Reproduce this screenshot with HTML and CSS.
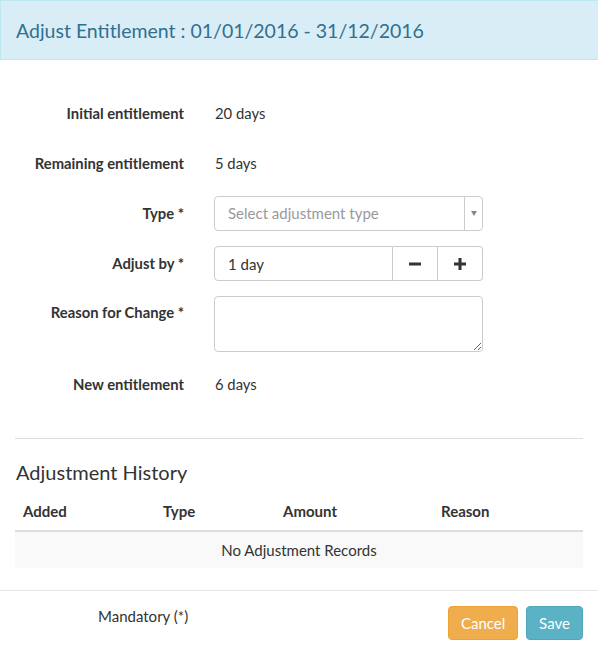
FILE: index.html
```html
<!DOCTYPE html>
<html>
<head>
<meta charset="utf-8">
<link rel="stylesheet" href="styles.css">
</head>
<body>
<div class="modal">
  <div class="modal-header">
    <h4 class="title">Adjust Entitlement : 01/01/2016 - 31/12/2016</h4>
  </div>
  <div class="modal-body">
    <div class="form">
      <div class="row">
        <div class="label">Initial entitlement</div>
        <div class="value">20 days</div>
      </div>
      <div class="row">
        <div class="label">Remaining entitlement</div>
        <div class="value">5 days</div>
      </div>
      <div class="row">
        <div class="label">Type *</div>
        <div class="control">
          <div class="select">
            <span class="placeholder">Select adjustment type</span>
            <span class="arrow"><span class="tri"></span></span>
          </div>
        </div>
      </div>
      <div class="row">
        <div class="label">Adjust by *</div>
        <div class="control">
          <div class="input-group">
            <input class="input" type="text" value="1 day">
            <button class="btn-icon" type="button"><svg width="12" height="12" viewBox="0 0 12 12"><rect x="0" y="4.5" width="12" height="3" fill="#333"/></svg></button>
            <button class="btn-icon last" type="button"><svg width="12" height="12" viewBox="0 0 12 12"><rect x="0" y="4.5" width="12" height="3" fill="#333"/><rect x="4.5" y="0" width="3" height="12" fill="#333"/></svg></button>
          </div>
        </div>
      </div>
      <div class="row tall">
        <div class="label">Reason for Change *</div>
        <div class="control">
          <textarea class="textarea"></textarea>
        </div>
      </div>
      <div class="row last-row">
        <div class="label">New entitlement</div>
        <div class="value">6 days</div>
      </div>
    </div>
    <hr class="divider">
    <h4 class="section-title">Adjustment History</h4>
    <table class="table">
      <thead>
        <tr>
          <th class="c1">Added</th>
          <th class="c2">Type</th>
          <th class="c3">Amount</th>
          <th class="c4">Reason</th>
        </tr>
      </thead>
      <tbody>
        <tr class="empty"><td colspan="4">No Adjustment Records</td></tr>
      </tbody>
    </table>
  </div>
  <div class="modal-footer">
    <div class="mandatory">Mandatory (*)</div>
    <div class="buttons">
      <button class="btn cancel" type="button">Cancel</button>
      <button class="btn save" type="button">Save</button>
    </div>
  </div>
</div>
</body>
</html>
```
FILE: styles.css
```css
* { box-sizing: border-box; }
html, body { margin: 0; padding: 0; background: #fff; }
body {
  font-family: Lato, "Open Sans", "Liberation Sans", sans-serif;
  font-size: 15px;
  line-height: 20px;
  color: #333;
}
.modal { width: 598px; }
.modal-header {
  height: 60px;
  background: #d9edf7;
  border: 1px solid #bce8f1;
  border-right: none;
  display: flex;
  align-items: center;
  padding: 0 15px;
}
.title {
  margin: 0;
  font-size: 19.5px;
  font-weight: 400;
  color: #31708f;
  line-height: 26px;
  padding-top: 2px;
}
.modal-body { padding: 36px 15px 0; }
.row { display: flex; height: 35px; margin-bottom: 15px; align-items: center; }
.row.last-row { margin-bottom: 0; }
.row.tall { height: 56px; align-items: flex-start; }
.row.tall .label { padding-top: 6px; padding-bottom: 0; }
.label {
  width: 169px;
  margin-right: 30px;
  text-align: right;
  font-weight: 700;
  font-size: 14.8px;
  padding-bottom: 2px;
}
.value { padding-left: 1px; font-size: 14.8px; padding-bottom: 2px; }
.control { width: 269px; }
.select {
  height: 35px;
  border: 1px solid #ccc;
  border-radius: 4px;
  display: flex;
  align-items: center;
}
.placeholder { flex: 1; padding-left: 13px; color: #999; padding-bottom: 1px; }
.arrow {
  width: 18px;
  height: 100%;
  border-left: 1px solid #ccc;
  display: flex;
  align-items: center;
  justify-content: center;
}
.tri {
  width: 0; height: 0;
  border-left: 3.5px solid transparent;
  border-right: 3.5px solid transparent;
  border-top: 5px solid #888;
}
.input-group { display: flex; height: 35px; }
.input {
  width: 179px;
  height: 35px;
  border: 1px solid #ccc;
  border-radius: 4px 0 0 4px;
  padding: 0 13px;
  font: inherit;
  color: #333;
  outline: none;
}
.btn-icon {
  width: 45px;
  height: 35px;
  border: 1px solid #ccc;
  border-left: none;
  background: #fff;
  padding: 0;
  display: flex;
  align-items: center;
  justify-content: center;
}
.btn-icon.last { border-radius: 0 4px 4px 0; }
.textarea {
  display: block;
  width: 269px;
  height: 56px;
  border: 1px solid #ccc;
  border-radius: 4px;
  font: inherit;
  padding: 6px 12px;
  resize: vertical;
  outline: none;
}
.divider {
  margin: 36px 0 0;
  border: none;
  border-top: 1px solid #ddd;
  height: 0;
}
.section-title {
  margin: 22px 0 10px 1px;
  font-size: 20px;
  font-weight: 400;
  line-height: 22px;
  color: #333;
}
.table { width: 568px; border-collapse: collapse; margin-bottom: 22px; }
.table th {
  text-align: left;
  font-weight: 700;
  padding: 8px 8px 9px;
  line-height: 20px;
  border-bottom: 2px solid #ddd;
}
.c1 { width: 140px; }
.c2 { width: 120px; }
.c3 { width: 158px; }
.c4 { width: 150px; }
.table td { padding: 8px; line-height: 20px; text-align: center; }
.empty { background: #f9f9f9; }
.modal-footer {
  border-top: 1px solid #e5e5e5;
  padding: 15px 15px 15px 98px;
  display: flex;
  justify-content: space-between;
  align-items: flex-start;
}
.mandatory { font-weight: 400; }
.buttons { display: flex; gap: 8px; }
.btn {
  height: 34px;
  border-radius: 4px;
  font: inherit;
  font-size: 15px;
  color: #fff;
  padding: 0 12px;
}
.cancel { width: 70px; background: #f0ad4e; border: 1px solid #eea236; }
.save { width: 57px; background: #5bb2c5; border: 1px solid #4fa6ba; }
```
